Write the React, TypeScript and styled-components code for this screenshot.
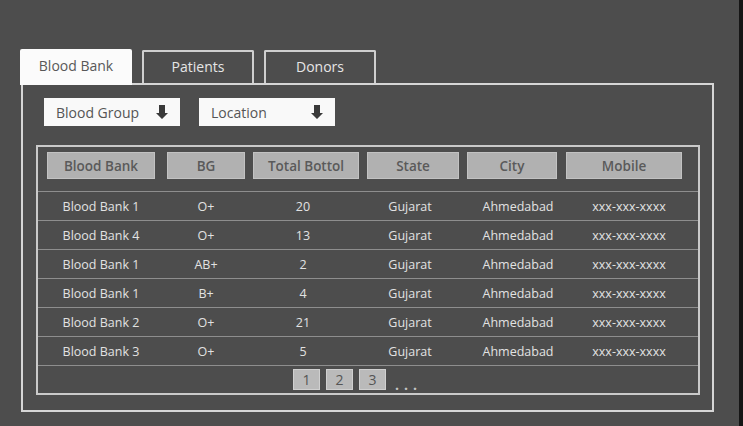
import React from "react";
import styled, { createGlobalStyle } from "styled-components";

const Global = createGlobalStyle`
  html, body { margin: 0; padding: 0; background: #4d4d4d; }
  body { font-family: "Open Sans", "Noto Sans", sans-serif; }
  * { box-sizing: border-box; }
`;

const Page = styled.div`
  width: 743px;
  height: 426px;
  background: #4d4d4d;
  border-right: 4px solid #151515;
  padding: 49px 0 0 20px;
  overflow: hidden;
`;

const TabBar = styled.div`
  display: flex;
  align-items: flex-end;
  gap: 10px;
  height: 34px;
`;

const Tab = styled.div<{ $active?: boolean }>`
  width: 112px;
  height: ${(p) => (p.$active ? "36px" : "33px")};
  margin-bottom: ${(p) => (p.$active ? "-2px" : "0")};
  position: relative;
  z-index: ${(p) => (p.$active ? 1 : 0)};
  display: flex;
  align-items: center;
  justify-content: center;
  font-size: 14px;
  padding-bottom: ${(p) => (p.$active ? "4px" : "2px")};
  color: ${(p) => (p.$active ? "#585858" : "#e6e6e6")};
  background: ${(p) => (p.$active ? "#fbfbfb" : "#4d4d4d")};
  border: ${(p) => (p.$active ? "none" : "2px solid #cfcfcf")};
  border-bottom: none;
  border-radius: 2px 2px 0 0;
`;

const Panel = styled.div`
  margin-left: 1px;
  width: 693px;
  height: 329px;
  border: 2px solid #d6d6d6;
  padding: 13px 0 0 13px;
`;

const FilterRow = styled.div`
  display: flex;
  gap: 19px;
  padding-left: 8px;
  margin-bottom: 19px;
`;

const Dropdown = styled.div`
  width: 136px;
  height: 28px;
  background: #f9f9f9;
  display: flex;
  align-items: center;
  justify-content: space-between;
  padding: 0 12px 0 12px;
  font-size: 14px;
  color: #555;
`;

const Table = styled.div`
  width: 664px;
  border: 2px solid #cacaca;
`;

const columns = [
  { w: 108, track: 120, dx: 0 },
  { w: 78, track: 86, dx: 0 },
  { w: 106, track: 114, dx: -3 },
  { w: 92, track: 100, dx: -3 },
  { w: 90, track: 99, dx: 6 },
  { w: 116, track: 116, dx: 5 },
];

const GridRow = styled.div`
  display: grid;
  grid-template-columns: ${columns.map((c) => c.track + "px").join(" ")};
  padding-left: 9px;
`;

const HeaderRow = styled(GridRow)`
  padding-top: 5px;
  padding-bottom: 12px;
`;

const HeadCell = styled.div<{ $w: number }>`
  width: ${(p) => p.$w}px;
  height: 27px;
  background: #b1b1b1;
  border: 1px solid #c2c2c2;
  display: flex;
  align-items: center;
  justify-content: center;
  font-size: 13.5px;
  font-weight: 600;
  color: #5a5a5a;
`;

const DataRow = styled(GridRow)`
  height: 29px;
  border-top: 1px solid #8e8e8e;
  align-items: center;
`;

const DataCell = styled.div<{ $w: number; $dx: number }>`
  width: ${(p) => p.$w}px;
  margin-left: ${(p) => p.$dx}px;
  text-align: center;
  font-size: 12.5px;
  color: #e2e2e2;
`;

const Pager = styled.div`
  height: 28px;
  border-top: 1px solid #8e8e8e;
  display: flex;
  align-items: flex-start;
  gap: 6px;
  padding: 3px 0 0 255px;
`;

const PageBtn = styled.div`
  width: 27px;
  height: 21px;
  background: #bababa;
  border: 1px solid #d0d0d0;
  display: flex;
  align-items: center;
  justify-content: center;
  font-size: 14px;
  color: #555;
`;

const Dots = styled.div`
  margin-left: 3px;
  padding-top: 6px;
  font-size: 14px;
  font-weight: 700;
  letter-spacing: 5px;
  color: #c4c4c4;
`;

const Arrow = () => (
  <svg width="12" height="16" viewBox="0 0 12 16">
    <path d="M3 1h6v8h3l-6 6-6-6h3z" fill="#3a3a3a" />
  </svg>
);

const headers = ["Blood Bank", "BG", "Total Bottol", "State", "City", "Mobile"];
const rows = [
  ["Blood Bank 1", "O+", "20", "Gujarat", "Ahmedabad", "xxx-xxx-xxxx"],
  ["Blood Bank 4", "O+", "13", "Gujarat", "Ahmedabad", "xxx-xxx-xxxx"],
  ["Blood Bank 1", "AB+", "2", "Gujarat", "Ahmedabad", "xxx-xxx-xxxx"],
  ["Blood Bank 1", "B+", "4", "Gujarat", "Ahmedabad", "xxx-xxx-xxxx"],
  ["Blood Bank 2", "O+", "21", "Gujarat", "Ahmedabad", "xxx-xxx-xxxx"],
  ["Blood Bank 3", "O+", "5", "Gujarat", "Ahmedabad", "xxx-xxx-xxxx"],
];

export default function App() {
  return (
    <>
      <Global />
      <Page>
        <TabBar>
          <Tab $active>Blood Bank</Tab>
          <Tab>Patients</Tab>
          <Tab>Donors</Tab>
        </TabBar>
        <Panel>
          <FilterRow>
            <Dropdown>
              Blood Group <Arrow />
            </Dropdown>
            <Dropdown>
              Location <Arrow />
            </Dropdown>
          </FilterRow>
          <Table>
            <HeaderRow>
              {headers.map((h, i) => (
                <HeadCell key={h} $w={columns[i].w}>
                  {h}
                </HeadCell>
              ))}
            </HeaderRow>
            {rows.map((r, ri) => (
              <DataRow key={ri}>
                {r.map((c, ci) => (
                  <DataCell key={ci} $w={columns[ci].w} $dx={columns[ci].dx}>
                    {c}
                  </DataCell>
                ))}
              </DataRow>
            ))}
            <Pager>
              <PageBtn>1</PageBtn>
              <PageBtn>2</PageBtn>
              <PageBtn>3</PageBtn>
              <Dots>...</Dots>
            </Pager>
          </Table>
        </Panel>
      </Page>
    </>
  );
}
